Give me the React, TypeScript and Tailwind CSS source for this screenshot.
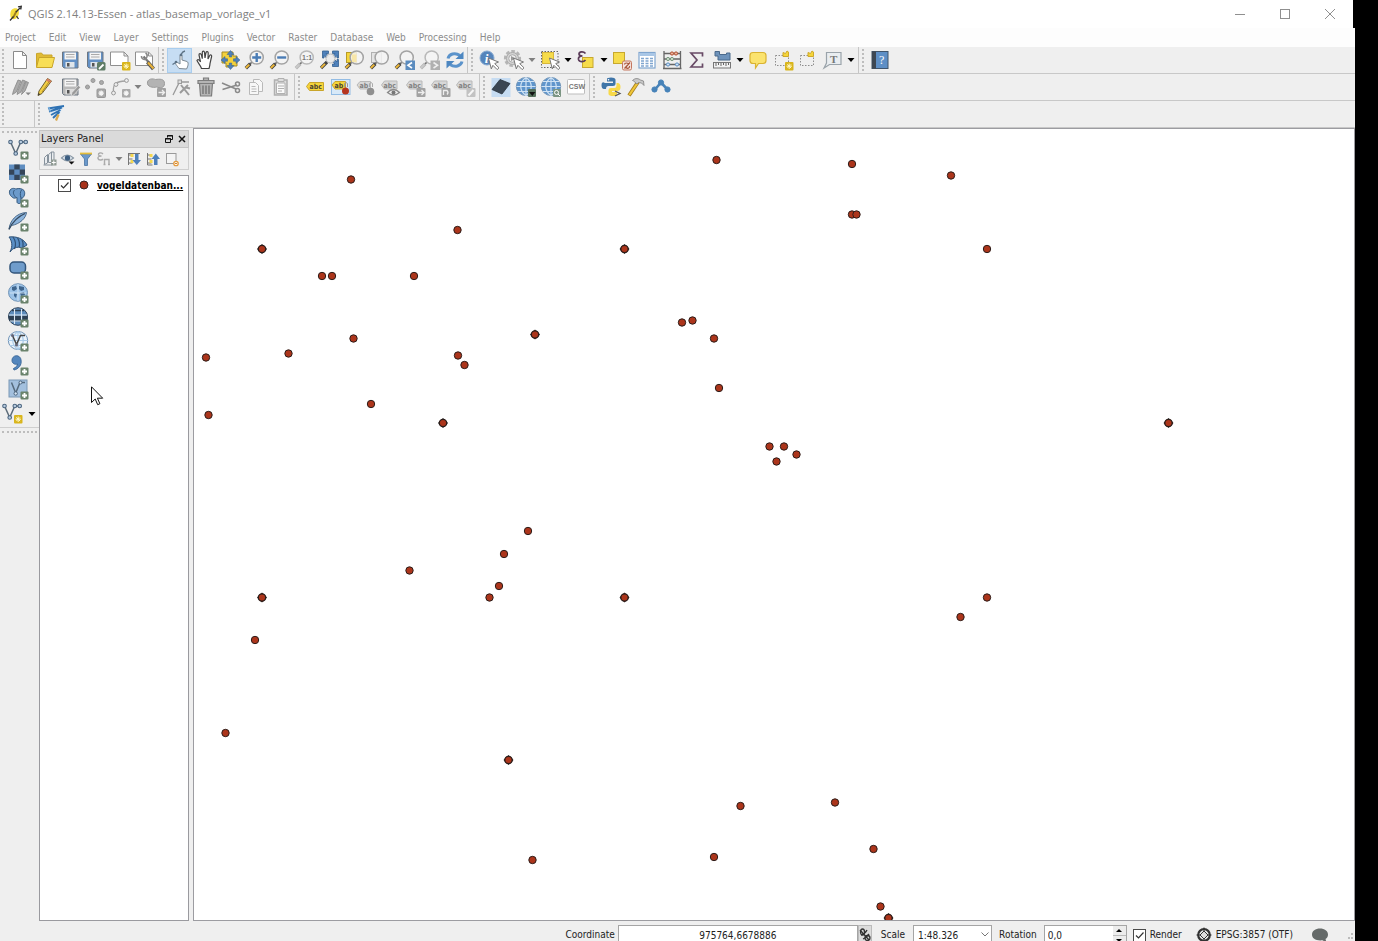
import type { ReactNode } from 'react'

const plusBadge = (
  <g>
    <rect x="14.500" y="14.500" width="8" height="8" rx="1" fill="#6a836c" />
    <path d="M18.500 16v5M16 18.500h5" stroke="#fff" strokeWidth="1.800" />
  </g>
)

const newBadge = (
  <g>
    <rect x="14" y="14" width="8.500" height="8.500" rx="1" fill="#d9b51c" />
    <path d="M18.200 15.500v5.500M15.500 18.200h5.500M16.300 16.300l3.800 3.800M20.100 16.300l-3.800 3.800" stroke="#fff7c4" strokeWidth="1" />
  </g>
)

const greyBadge = (
  <g>
    <rect x="14" y="14" width="8.500" height="8.500" rx="1" fill="#a9a9a9" />
    <path d="M18.200 15.500v5.400M15.500 18.200h5.400M16.400 16.400l3.600 3.600M20 16.400l-3.600 3.600" stroke="#f5f5f5" strokeWidth="1.200" />
  </g>
)

const arrowPointer = (
  <path d="M11.500 10l10 4-3.800 1.600 4.300 4.200-1.800 1.800-4.300-4.300-1.600 3.600z" fill="#fff" stroke="#777" strokeWidth="1" />
)

const lens = (grey = false) => (
  <g>
    <path d="M9.300 13.700l-3.300 3.300" stroke="#666" strokeWidth="1.600" />
    <path d="M7.300 15.800L2.800 20.300" stroke={grey ? '#b5b5b5' : '#444'} strokeWidth="3.400" />
    <path d="M6.300 16.600L2.800 20" stroke={grey ? '#c9c9c9' : '#edb83a'} strokeWidth="2" />
    <circle cx="13.700" cy="9.500" r="6.600" fill="#f4f4f4" fillOpacity="0.850" stroke={grey ? '#b8b8b8' : '#a3a3a3'} strokeWidth="1.500" />
  </g>
)

const disk = (body: string, label: string) => (
  <g>
    <path d="M4.500 4h15.500v16H6L4.500 18.500z" fill={body} stroke="#6c7681" strokeWidth="1" />
    <rect x="6.500" y="4.500" width="11.500" height="7" fill="#f4f4f4" />
    <path d="M8 6.500h8.500M8 9h8.500" stroke="#aaa" strokeWidth="1" />
    <rect x="7.500" y="14" width="9" height="5.500" fill={label} />
    <rect x="9" y="15" width="2.500" height="3.500" fill="#555" />
  </g>
)

const abcTag = (fill: string, stroke: string, ink: string, small = false) => (
  <g>
    <path d={small ? 'M3 10l3-3.500h10.500v7.500H6z' : 'M2.500 11.500l3-4H19.500v8H5.500z'} fill={fill} stroke={stroke} strokeWidth="1" />
    <text x="5.500" y={small ? 13 : 14} fontSize="7" fontWeight="bold" fontFamily="DejaVu Sans Condensed, sans-serif" fill={ink}>
      {small ? 'ab' : 'abc'}
    </text>
  </g>
)

const greyTag = (
  <g>
    <path d="M2.500 10l3-4H18v8H5.500z" fill="#d8d8d8" stroke="#b9b9b9" strokeWidth="1" />
    <text x="4.500" y="12.500" fontSize="7" fontWeight="bold" fontFamily="DejaVu Sans Condensed, sans-serif" fill="#808080">
      abc
    </text>
  </g>
)

const vectorNodes = (
  <g fill="#b9cde0" stroke="#4c6680" strokeWidth="1.100">
    <path d="M4.500 5L9.700 16.500 14.800 5H19.700" fill="none" stroke="#5b6b78" strokeWidth="1.500" />
    <circle cx="4.500" cy="5" r="1.800" />
    <circle cx="14.800" cy="5" r="1.800" />
    <circle cx="19.700" cy="5" r="1.800" />
    <circle cx="9.700" cy="16.500" r="1.800" />
  </g>
)

const globe = (land: string, line: string) => (
  <g>
    <ellipse cx="12" cy="11.500" rx="9.700" ry="9" fill={land} stroke="#7295b8" strokeWidth="1" />
    <path
      d="M12 2.500v18M2.500 11.500h19M4 6.500h16M4 16.500h16M12 2.500c-7 5-7 13 0 18M12 2.500c7 5 7 13 0 18"
      fill="none"
      stroke={line}
      strokeWidth="1.200"
    />
  </g>
)

const icons: Record<string, ReactNode> = {
  newProject: <path d="M5.500 3.500h9l4 4v13h-13zM14.500 3.500v4h4" fill="#fff" stroke="#8b8b8b" />,
  open: (
    <g stroke="#c9a52a" strokeWidth="1">
      <path d="M3.500 19V5.500l5-.5 1.500 2h9v4" fill="#e0bb35" />
      <path d="M3.500 19.500L6 9.500h15.500l-2.500 10z" fill="#f8de55" />
    </g>
  ),
  save: disk('#6290c5', '#dfe5ea'),
  saveAs: (
    <g>
      {disk('#6290c5', '#dfe5ea')}
      <rect x="14" y="14" width="8.500" height="8.500" rx="1.500" fill="#5f7d66" />
      <path d="M16 21l4.500-4.500" stroke="#fff" strokeWidth="1.800" />
    </g>
  ),
  newComposer: (
    <g>
      <path d="M2.500 4h13.500l4 4v9.500H2.500zM16 4v4h4" fill="#fff" stroke="#8f8f8f" />
      {newBadge}
    </g>
  ),
  composerManager: (
    <g>
      <path d="M2.500 4h13l4 4v9.500h-17zM15.500 4v4h4" fill="#fff" stroke="#8f8f8f" />
      <path d="M10.500 8.500l5 5.500" stroke="#777" strokeWidth="2.200" />
      <path d="M8.500 8a3 3 0 0 0 4.500 3l1-2.500a3 3 0 0 0-1.500-3.500" fill="none" stroke="#888" strokeWidth="1.600" />
      <path d="M14.500 14l6 7" stroke="#555" strokeWidth="4" />
      <path d="M15 14.500l5.500 6" stroke="#e5b13b" strokeWidth="2.200" />
    </g>
  ),
  touch: (
    <g>
      <path d="M11 20.500c-2-3-4.500-5-3-6 1.500-.5 3 1 4 1.500V7.500c0-1.800 2-1.800 2 0V12l5 1.500c2 1 1 5-.5 7.500z" fill="#fff" stroke="#7b8791" strokeWidth="1" />
      <path d="M13 6.500c1-2 2-3 4-3.500M4.500 16.500l4-2.500" fill="none" stroke="#5c7285" strokeWidth="1.300" />
      <circle cx="13" cy="7" r="1.300" fill="#5c7285" />
      <circle cx="8" cy="14" r="1.300" fill="#5c7285" />
    </g>
  ),
  pan: (
    <path
      d="M8.500 20.500c-1-3.500-3.500-5.500-4.500-8 .5-1.800 2.500-.5 3.500 1.500L6 7c0-1.800 1.800-2 2.300-.3l1 4V4.500c0-1.800 2-1.800 2.200 0l.5 5.500 1-5.500c.5-1.500 2.300-1 2.200.5L15 11l1.700-3.500c.8-1.300 2.300-.5 1.900 1L17 15.500c0 2-.5 3-1 5z"
      fill="#fff"
      stroke="#444"
      strokeWidth="1.200"
    />
  ),
  panSelection: (
    <g>
      <path d="M4 4h11v4h4v10h-7v1H8v-4H4z" fill="#f4d13a" stroke="#a48a24" />
      <g fill="#4d7fba" stroke="#33608f" strokeWidth="0.500">
        <path d="M12.500 2.500l3.500 4h-2.300v2.500h-2.400V6.500H9zM12.500 21.500l3.500-4h-2.300V15h-2.400v2.500H9zM3 12l4-3.500v2.300h2.500v2.400H7v2.300zM22 12l-4-3.500v2.300h-2.500v2.400H18v2.300z" />
      </g>
    </g>
  ),
  zoomIn: (
    <g>
      {lens()}
      <path d="M13.700 5v9M9.200 9.500h9" stroke="#4a7cb5" strokeWidth="2.400" />
    </g>
  ),
  zoomOut: (
    <g>
      {lens()}
      <path d="M9.200 9.500h9" stroke="#4a7cb5" strokeWidth="2.400" />
    </g>
  ),
  zoomNative: (
    <g>
      {lens(true)}
      <text x="9" y="12" fontSize="7" fontWeight="bold" fontFamily="Liberation Sans, sans-serif" fill="#777">
        1:1
      </text>
    </g>
  ),
  zoomFull: (
    <g>
      <path d="M4.500 3h6v2.500H8L10.500 8l-2 2L6 7.500V10H4.500zM20.500 3h-6v2.500H17L14.500 8l2 2L19 7.500V10h1.500zM20.500 18.500h-6V16H17l-2.500-2.500 2-2L19 14v-2.500h1.500z" fill="#4f81bb" stroke="#345f90" strokeWidth="0.800" />
      <circle cx="12.500" cy="10.500" r="4.500" fill="#e9e9e9" fillOpacity="0.900" stroke="#bbb" />
      <path d="M9 14L3 20" stroke="#444" strokeWidth="3.200" />
      <path d="M7 15.800L3.200 19.600" stroke="#edb83a" strokeWidth="1.900" />
    </g>
  ),
  zoomSelection: (
    <g>
      <rect x="3.500" y="4.500" width="10" height="10" fill="#f5d53a" stroke="#b79b28" />
      {lens()}
      <path d="M9 6.500h4.500v7.500H9z" fill="#f8e6a8" />
    </g>
  ),
  zoomLayer: (
    <g>
      <rect x="3.500" y="4.500" width="10" height="10" fill="#e3e3e3" stroke="#b0b0b0" />
      {lens()}
    </g>
  ),
  zoomLast: (
    <g>
      {lens()}
      <rect x="12.500" y="12.500" width="9.500" height="9.500" fill="#5b8cbf" />
      <path d="M19 14.500l-4 2.800 4 2.700" fill="none" stroke="#fff" strokeWidth="1.600" />
    </g>
  ),
  zoomNext: (
    <g>
      {lens(true)}
      <rect x="12.500" y="12.500" width="9.500" height="9.500" fill="#b0b0b0" />
      <path d="M15.500 14.500l4 2.800-4 2.700" fill="none" stroke="#eee" strokeWidth="1.600" />
    </g>
  ),
  refresh: (
    <g fill="none" stroke="#5b93cb" strokeWidth="3">
      <path d="M5 10.500C6 6 12 4 17 7.500" />
      <path d="M19 13.500C18 18 12 20 7 16.500" />
      <path d="M20.500 3.500v7.500h-8zM3.500 20.500V13h8z" fill="#4d87c1" stroke="none" />
    </g>
  ),
  identify: (
    <g>
      <circle cx="10" cy="10" r="7" fill="#5584bb" stroke="#86a9d1" />
      <text x="7.800" y="14.500" fontSize="13" fontWeight="bold" fontStyle="italic" fontFamily="Liberation Serif, serif" fill="#fff">
        i
      </text>
      {arrowPointer}
    </g>
  ),
  action: (
    <g>
      <circle cx="10.500" cy="10.500" r="7.300" fill="#dedede" stroke="#b5b5b5" strokeWidth="2.600" strokeDasharray="3.500 2" />
      <circle cx="10.500" cy="10.500" r="6" fill="#d5d5d5" stroke="#aaa" />
      <circle cx="10.500" cy="10.500" r="3.800" fill="#eee" stroke="#aaa" />
      <path d="M9 8l4.500 2.500L9 13z" fill="#999" />
      {arrowPointer}
    </g>
  ),
  select: (
    <g>
      <rect x="3.500" y="3.500" width="16.500" height="16" fill="none" stroke="#666" strokeDasharray="1.500 1.500" />
      <rect x="4.500" y="4.500" width="11" height="11" fill="#f6dc4b" stroke="#d8b83a" />
      {arrowPointer}
    </g>
  ),
  expression: (
    <g>
      <rect x="8.500" y="9.500" width="10.500" height="10" fill="#f6dc4b" stroke="#c7a82e" />
      <path d="M11.500 5.500C9.500 3 5 3.500 5 6c0 1.500 1.500 2 3.500 2C5.500 8 4 9.500 4.500 11.500c1 3 5.500 2.500 7 .5" fill="none" stroke="#5a3b58" strokeWidth="1.700" />
    </g>
  ),
  deselect: (
    <g>
      <rect x="3.500" y="4.500" width="11" height="11" fill="#f6dc4b" stroke="#c7a82e" />
      <rect x="12.500" y="13" width="9" height="9" rx="1.500" fill="#f4e2dc" stroke="#c5775f" />
      <path d="M14.500 20.500l5.500-6M14.500 16.500c0-2 4-2 4 0M16 19.500c2 2 4 0 3.500-1.500" fill="none" stroke="#a9543a" strokeWidth="1.200" />
    </g>
  ),
  table: (
    <g>
      <rect x="4" y="4.500" width="16" height="15.500" fill="#fff" stroke="#7fa5cf" strokeWidth="1.200" />
      <rect x="4.500" y="5" width="15" height="3" fill="#a8c6e6" />
      <path d="M6 10.500h3M10.500 10.500h3M15 10.500h3M6 13h3M10.500 13h3M15 13h3M6 15.500h3M10.500 15.500h3M15 15.500h3M6 18h3M10.500 18h3M15 18h3" stroke="#7fa5cf" strokeWidth="1.300" />
    </g>
  ),
  abacus: (
    <g>
      <path d="M4 3v18M20.500 3v18M3 20.500h18.500M4 5.500h16.500M4 11h16.500M4 16.500h16.500" fill="none" stroke="#666" strokeWidth="1.300" />
      <g fill="#f0b29a" stroke="#b14f30">
        <circle cx="12" cy="5.500" r="1.600" />
        <circle cx="16" cy="5.500" r="1.600" />
      </g>
      <g fill="#cfe0cf" stroke="#77967d">
        <circle cx="8" cy="11" r="1.600" />
        <circle cx="12" cy="11" r="1.600" />
      </g>
      <g fill="#cfe2f4" stroke="#5b8fc5">
        <circle cx="8" cy="16.500" r="1.600" />
        <circle cx="17" cy="16.500" r="1.600" />
      </g>
    </g>
  ),
  sigma: <path d="M17.500 8.500V5H6L12 12l-6 7h11.500v-3.500" fill="none" stroke="#684a66" strokeWidth="1.700" />,
  measure: (
    <g>
      <path d="M5 3.500h4.500v3h7V5H20v7H8V8H5z" fill="#6e93bb" stroke="#4b6a8c" />
      <rect x="3.500" y="14.500" width="17" height="5.500" fill="#f2f2f2" stroke="#777" />
      <path d="M6 15v3M8.500 15v2M11 15v3M13.500 15v2M16 15v3M18.500 15v2" stroke="#666" />
    </g>
  ),
  mapTips: <path d="M7 4.500h10q3 0 3 3v5q0 3-3 3h-4.500l-3 4.500v-4.500H7q-3 0-3-3v-5q0-3 3-3z" fill="#fbe36e" stroke="#dab332" strokeWidth="1.200" />,
  newBookmark: (
    <g>
      <path d="M4.500 7.500h13v10h-13z" fill="none" stroke="#8d8d8d" strokeDasharray="1.500 1.500" />
      <path d="M12 4.500l2.500 1L16 3l1.500 1v4.500H12z" fill="#f5d53a" stroke="#cfa92b" />
      {newBadge}
    </g>
  ),
  bookmarks: (
    <g>
      <path d="M4.500 7.500h13v10h-13z" fill="none" stroke="#8d8d8d" strokeDasharray="1.500 1.500" />
      <path d="M12 4.500l2.500 1L16 3l1.500 1v4.500H12z" fill="#f5d53a" stroke="#cfa92b" />
    </g>
  ),
  annotation: (
    <g>
      <path d="M5.500 4.500h14.500v12H8.500L3 20l2.500-5z" fill="#e9edf0" stroke="#9aa3aa" strokeWidth="1.200" />
      <text x="9" y="14.500" fontSize="11" fontWeight="bold" fontFamily="Liberation Serif, serif" fill="#777">
        T
      </text>
    </g>
  ),
  help: (
    <g>
      <rect x="4" y="3.500" width="16" height="17" fill="#5e8fc6" stroke="#40546b" />
      <rect x="4" y="3.500" width="4" height="17" fill="#3d4753" />
      <text x="11" y="16" fontSize="12" fontFamily="Liberation Serif, serif" fill="#fff">
        ?
      </text>
    </g>
  ),
  currentEdits: (
    <g>
      <path d="M4.500 19.500l1-4L10 5l3 1-4.500 11zM9 19.500l1-4L14.500 5l3 1L13 17zM13.500 19.500l1-4L18 6.500l2.500 1L17 16z" fill="#ababab" stroke="#868686" strokeWidth="0.800" />
      <path d="M17.500 17.500h5.500l-2.800 2.800z" fill="#888" />
    </g>
  ),
  pencil: (
    <g>
      <path d="M5 20.500l1-4.500L14.500 3.500l4 2.500L9 18.500z" fill="#f3cf45" stroke="#6e6034" strokeWidth="1" />
      <path d="M14.500 3.500l4 2.500-1.500 2-4-2.500z" fill="#d97e63" />
      <path d="M9 17l7.500-11" stroke="#b1902a" />
      <path d="M5 20.500l.6-2.500 1.700 1.300z" fill="#333" />
    </g>
  ),
  saveEdits: (
    <g>
      {disk('#b9b9b9', '#dcdcdc')}
      <path d="M13 21.500l1-4 6.500-7 2 1.800-6.500 7.500z" fill="#999" stroke="#eee" strokeWidth="0.600" />
    </g>
  ),
  addPoints: (
    <g fill="#ababab" stroke="#979797">
      <circle cx="4.500" cy="12" r="2" />
      <circle cx="10" cy="5.500" r="2" />
      <circle cx="18.500" cy="7.500" r="2" />
      {greyBadge}
    </g>
  ),
  addCurve: (
    <g>
      <path d="M5.500 17C4.500 8 9 6.500 17.500 6" fill="none" stroke="#a3a3a3" strokeWidth="1.300" />
      <g fill="#eee" stroke="#999">
        <circle cx="5.500" cy="18" r="1.900" />
        <circle cx="8" cy="9.500" r="1.900" />
        <circle cx="18.500" cy="5.500" r="1.900" />
      </g>
      {greyBadge}
    </g>
  ),
  moveFeature: (
    <g>
      <path d="M3.500 7c1-3.500 5-3.500 8-2.500 4-.5 9-1 9 4s-5 4.500-8 3.500c-3 1-10 0-9-5z" fill="#b3b3b3" stroke="#9a9a9a" />
      <rect x="13" y="13" width="9" height="9" rx="1" fill="#a2a2a2" />
      <path d="M14.500 17.500h6M18 15l2.500 2.500L18 20" fill="none" stroke="#eee" strokeWidth="1.300" />
    </g>
  ),
  nodeTool: (
    <g fill="none" stroke="#9a9a9a">
      <path d="M4 20L10.500 7h9.500" strokeWidth="1.300" />
      <rect x="9" y="5" width="3.500" height="3.500" fill="#ddd" />
      <path d="M19 10l-8 8M12 10l8 10M17 12.500l4 1" strokeWidth="2" />
    </g>
  ),
  trash: (
    <g fill="#b4b4b4" stroke="#7d7d7d" strokeWidth="1.200">
      <path d="M9.500 5V3h5v2M5.500 8.500h13L17.500 21h-11z" />
      <path d="M4 5.500h16v3H4z" />
      <path d="M9 10.500v8.500M12 10.500v8.500M15 10.500v8.500" stroke="#6d6d6d" fill="none" />
    </g>
  ),
  cut: (
    <g fill="none" stroke="#8a8a8a" strokeWidth="1.500">
      <path d="M3 8l14 6M3.500 14.500L18 10" />
      <circle cx="18.500" cy="9" r="2" />
      <circle cx="18.500" cy="15.500" r="2" />
    </g>
  ),
  copy: (
    <g fill="#f7f7f7" stroke="#b9b9b9">
      <path d="M9.500 4.500h6l3 3v9h-9z" />
      <path d="M5.500 7.500h6l3 3v9h-9zM7.500 11.500h4M7.500 14h5M7.500 16.500h5" />
    </g>
  ),
  paste: (
    <g fill="#dedede" stroke="#b0b0b0">
      <path d="M5.500 5h12.500v15H5.500z" strokeWidth="1.500" />
      <path d="M7.500 8h8.500v10.500H7.500z" fill="#fafafa" />
      <path d="M9 3.500h6v3H9z" />
      <path d="M9 11h6M9 13.500h6M9 16h4" />
    </g>
  ),
  label: abcTag('#f5d53a', '#c9a52a', '#4a4230'),
  labelActive: (
    <g>
      <rect x="2.500" y="4.500" width="18.500" height="15" fill="#d8e9f8" stroke="#93bce4" />
      {abcTag('#f5d53a', '#c9a52a', '#4a4230', true)}
      <circle cx="16.500" cy="16" r="3.500" fill="#b53520" />
      <path d="M15.500 12V8.500q1.500-2 3 0V12" fill="none" stroke="#999" />
    </g>
  ),
  labelPin: (
    <g>
      {abcTag('#d8d8d8', '#b9b9b9', '#808080', true)}
      <circle cx="16.500" cy="16.500" r="3.800" fill="#8f8f8f" />
      <path d="M15.500 12V8.500q1.500-2 3 0V12" fill="none" stroke="#aaa" />
    </g>
  ),
  labelShow: (
    <g>
      {greyTag}
      <path d="M8.500 17.500q6-6 12 0q-6 5-12 0z" fill="#eee" stroke="#8a8a8a" strokeWidth="1.300" />
      <circle cx="14.500" cy="17.500" r="2" fill="#777" />
    </g>
  ),
  labelMove: (
    <g>
      {greyTag}
      <rect x="12.500" y="13" width="9" height="9" rx="1" fill="#a2a2a2" />
      <path d="M14 17.500h6M17.500 15l2.500 2.500-2.500 2.500" fill="none" stroke="#eee" strokeWidth="1.300" />
    </g>
  ),
  labelRotate: (
    <g>
      {greyTag}
      <rect x="12.500" y="13" width="9" height="9" rx="1" fill="#a2a2a2" />
      <path d="M14.500 20v-4.500h3.500q2 2 0 4" fill="none" stroke="#eee" strokeWidth="1.300" />
    </g>
  ),
  labelEdit: (
    <g>
      {greyTag}
      <rect x="12.500" y="13" width="9" height="9" rx="1" fill="#c2c2c2" />
      <path d="M14.500 20.500l5-5.500" stroke="#f5f5f5" strokeWidth="2" />
    </g>
  ),
  darkTile: (
    <g>
      <rect x="2.500" y="3" width="19" height="19" fill="#c6dcf2" />
      <path d="M3 14.500L11 4.500l10 4-8 10.500z" fill="#3a4653" stroke="#2a333d" strokeWidth="0.800" />
    </g>
  ),
  metaGlobe: (
    <g>
      {globe('#5f95cc', '#cfe2f4')}
      <rect x="14" y="14" width="8" height="8" rx="1" fill="#55705c" />
      <path d="M15 17h6.500l-3.200 4z" fill="#111" />
    </g>
  ),
  searchGlobe: (
    <g>
      {globe('#5f95cc', '#cfe2f4')}
      <rect x="14" y="14" width="8" height="8" rx="1" fill="#7c9583" />
      <circle cx="17.500" cy="17.500" r="2" fill="none" stroke="#fff" />
      <path d="M19 19l2 2" stroke="#fff" />
    </g>
  ),
  csw: (
    <g>
      <rect x="3.500" y="4.500" width="17" height="14.500" rx="1" fill="#fff" stroke="#bdbdbd" />
      <text x="4.700" y="14" fontSize="7" fontWeight="bold" fontFamily="Liberation Sans, sans-serif" fill="#777">
        CSW
      </text>
    </g>
  ),
  python: (
    <g>
      <path d="M8 8h6V6.500H8V4q0-1.500 4-1.500t4.500 2V9q0 2-2.500 2H9.500Q7 11 7 14H5q-2.500 0-2.500-4T6 8z" fill="#3f75a8" />
      <path d="M17.500 8H19q2.500.5 2.500 4T19 16h-6v1h5v2q0 2-4 2t-4.500-2v-4q0-2 2.500-2h3.500q2 0 2-3z" fill="#f8d94a" />
      <circle cx="9.500" cy="4.700" r="0.800" fill="#fff" />
      <path d="M16 16l5 2.500-5 2.500" fill="none" stroke="#555" strokeWidth="1.300" />
    </g>
  ),
  hammer: (
    <g>
      <path d="M5 20.500L14 7" stroke="#a47f1e" strokeWidth="3.800" />
      <path d="M5.300 20L13.500 8" stroke="#f0c638" strokeWidth="2.200" />
      <path d="M8.500 5.500c3-3 6-2 8-.5l3 1 .5 4.500-2.500-2.500-3-.5-1.500 1.500-2-1.500c-.5-1.500-1.500-1.500-2.500-2z" fill="#c9c9c9" stroke="#808080" strokeWidth="0.800" />
    </g>
  ),
  processing: (
    <g fill="#4783b9" stroke="#4783b9">
      <path d="M6 14.500L12 7.500l6.500 7" fill="none" strokeWidth="2.600" />
      <circle cx="12" cy="7.500" r="2.600" />
      <circle cx="5.500" cy="14.500" r="2.600" />
      <circle cx="18.500" cy="14.500" r="2.600" />
    </g>
  ),
  fan: (
    <g>
      <path d="M4 5l16-1-8 15z" fill="#dce9f5" />
      <path d="M4 6.500L20 4M5 9.500l13-4M7 13L16.500 8M9 16l6.500-6" fill="none" stroke="#2f72b3" strokeWidth="1.900" />
      <path d="M4.500 5l2 4.500" stroke="#7fb0dc" strokeWidth="1.500" />
      <path d="M14.500 12.500l-2.500 6" stroke="#dca94b" strokeWidth="2.200" />
    </g>
  ),
  addVector: (
    <g>
      {vectorNodes}
      {plusBadge}
    </g>
  ),
  addRaster: (
    <g>
      <rect x="3" y="3.500" width="16" height="15.500" fill="#5f8dc0" />
      <path d="M8.300 3.500h5.400v5H8.300zM3 8.500h5.300v5.300H3zM13.700 8.500H19v5.300h-5.300zM8.300 13.800h5.400V19H8.300z" fill="#35465a" />
      {plusBadge}
    </g>
  ),
  addPostgis: (
    <g>
      <path d="M4 5c2-2.500 5-1.500 6-1 3-1 6-.5 8 1.500 1.500 3 .5 6-2 8l-1-.5v4c0 2-4 2-4 0v-4.500c-2 1-3.500.5-3.500.5C4 11 2.500 8 4 5z" fill="#6b9acb" stroke="#35597e" />
      <path d="M8.500 5c-2 2.500-1 5 1.500 7.500M15.500 5c-1.500 2-1.500 5-.5 8" fill="none" stroke="#35597e" />
      {plusBadge}
    </g>
  ),
  addSpatialite: (
    <g>
      <path d="M3 20C4 12 10 4 20.500 3.500 20 9 14 15 5.500 16.500z" fill="#8cb4dd" stroke="#4b6a8a" />
      <path d="M3 20.500C6 13 13 7 19 4.500" fill="none" stroke="#33485e" strokeWidth="1.300" />
      {plusBadge}
    </g>
  ),
  addMssql: (
    <g>
      <path d="M3 4c8-1 15 2 18 8l-5 3c-5-2-9 0-12 4 3-6 2-11-1-15z" fill="#5a8fc6" stroke="#2f5176" />
      <path d="M7 4c3 4 3 8 1.500 12M11.500 5c2 3 2.500 6 1.500 9M16 7c1.500 2.500 1.500 5 1 7.500" fill="none" stroke="#2f5176" strokeWidth="1.200" />
      {plusBadge}
    </g>
  ),
  addOracle: (
    <g>
      <rect x="4" y="5" width="15.500" height="11" rx="4" fill="#6f9ccb" stroke="#33567c" strokeWidth="1.500" />
      {plusBadge}
    </g>
  ),
  addWms: (
    <g>
      <ellipse cx="12" cy="11.500" rx="9.500" ry="8.800" fill="#9cc3e8" stroke="#7295b8" />
      <path d="M6 6l4-1 1 3-3 2-2-1zM13 5l5 1v3l-3 1-2-2zM8 12l3 1-1 4-2-2zM14 12l4-1 1 3-4 1z" fill="#3f658d" />
      <path d="M4 12h16M12 3v17" stroke="#dbe9f6" strokeWidth="0.800" />
      {plusBadge}
    </g>
  ),
  addWcs: (
    <g>
      <ellipse cx="12" cy="11.500" rx="9.500" ry="8.800" fill="#5d8cbc" stroke="#2f435a" />
      <path d="M6 5.500h12M3 11.500h4.500v4H4zM9 11.500h6v4H9zM17 11.500h4v4h-4z" fill="#2e4054" stroke="#2e4054" strokeWidth="1.500" />
      <path d="M3 10h18M4 16h16M8.500 4v15M15.500 4v15" stroke="#dce9f5" strokeWidth="1.100" />
      {plusBadge}
    </g>
  ),
  addWfs: (
    <g>
      {globe('#eaf3fb', '#a9cbe9')}
      <path d="M6.500 6.500L10.500 15.500l4-9h4.500" fill="none" stroke="#444" strokeWidth="1.500" />
      <circle cx="6.500" cy="6.500" r="1.500" fill="#667" />
      <circle cx="10.500" cy="16" r="1.500" fill="#667" />
      {plusBadge}
    </g>
  ),
  addCsv: (
    <g>
      <path d="M6 7.500a4.500 4.500 0 0 1 9-.5c1 5-2.500 9-7 10l-.5-1.500c2.500-1 4-3 4-4.500-3 1-5.500-1-5.500-3.500z" fill="#5486bd" stroke="#3d6a9b" />
      {plusBadge}
    </g>
  ),
  addVirtual: (
    <g>
      <rect x="3" y="3" width="18" height="17" fill="#a3c0de" stroke="#7b98b5" />
      <path d="M5.500 5.500L9.700 16l4.300-10.500h5" fill="none" stroke="#55697c" strokeWidth="1.500" />
      <circle cx="9.700" cy="16.500" r="1.700" fill="#d6e4f1" stroke="#4c6680" />
      <circle cx="14.500" cy="5.500" r="1.500" fill="#d6e4f1" stroke="#4c6680" />
      {plusBadge}
    </g>
  ),
  newVector: (
    <g>
      {vectorNodes}
      {newBadge}
    </g>
  ),
  addGroup: (
    <g fill="#e8ebee" stroke="#87929c">
      <path d="M6.500 10.500l3-3v8.500l-3 1.500zM10.500 7.500L13.500 5v10.500h-3zM13.500 5h2.500v9" />
      <path d="M5.500 18h9" />
      <rect x="13" y="12.500" width="5.500" height="6" fill="#8f9a93" stroke="none" />
      <path d="M15.800 13.500v4M13.800 15.500h4" stroke="#fff" />
    </g>
  ),
  visibility: (
    <g>
      <path d="M5.500 11q5.500-6 12 0q-6 5.500-12 0z" fill="#e8eef4" stroke="#8b99a6" strokeWidth="1.200" />
      <circle cx="11.500" cy="11" r="2.700" fill="#3e5f82" />
      <path d="M12.500 14.500h6l-3 3z" fill="#111" />
    </g>
  ),
  filter: (
    <g>
      <path d="M6.500 7h11l-4 5v6.500h-3V12z" fill="#6b99cb" stroke="#4a74a2" strokeWidth="0.800" />
      <path d="M6 6.500h12" stroke="#e5be3b" strokeWidth="1.800" />
    </g>
  ),
  filterExpr: (
    <g fill="none" stroke="#ababab">
      <path d="M11 7C9 5 6 6 6.500 8c.5 1 1.500 1 3 1-2 0-4 .5-3.500 2.500.5 2 4 2 5 .5" strokeWidth="1.400" />
      <path d="M12.500 17.500v-5h4.500v5M11.500 17.500h2M16 17.500h2" strokeWidth="1.400" />
    </g>
  ),
  expand: (
    <g>
      <path d="M6.500 6v12M6.500 8h4M6.500 12h4M6.500 16h4M6 6.500h12" fill="none" stroke="#777" />
      <path d="M8.500 7h3v3h-3zM8.500 13h3v3h-3z" fill="#f4d74e" />
      <path d="M13 7h3.500v6H19l-4.200 5-4.300-5H13z" fill="#4d80ba" />
    </g>
  ),
  collapse: (
    <g>
      <path d="M6.500 6v12M6.500 8h4M6.500 12h4M6.500 16h4M6.500 18h5" fill="none" stroke="#777" />
      <path d="M8.500 7h3v3h-3zM8.500 13h3v3h-3z" fill="#f4d74e" />
      <path d="M13 18h3.500v-6H19l-4.200-5.500L10.500 12H13z" fill="#4d80ba" />
    </g>
  ),
  removeLayer: (
    <g>
      <rect x="6.500" y="6.500" width="9.500" height="10" fill="#f4f4f4" stroke="#9a9a9a" />
      <circle cx="16" cy="16.500" r="2.200" fill="#fff" stroke="#e39c42" strokeWidth="1.300" />
      <path d="M15 16.500h2" stroke="#d98425" />
    </g>
  ),
}

const fileTools = ['newProject', 'open', 'save', 'saveAs', 'newComposer', 'composerManager']
const navTools = ['pan', 'panSelection', 'zoomIn', 'zoomOut', 'zoomNative', 'zoomFull', 'zoomSelection', 'zoomLayer', 'zoomLast', 'zoomNext', 'refresh']
const labelTools = ['label', 'labelActive', 'labelPin', 'labelShow', 'labelMove', 'labelRotate', 'labelEdit']
const layerTools = ['addVector', 'addRaster', 'addPostgis', 'addSpatialite', 'addMssql', 'addOracle', 'addWms', 'addWcs', 'addWfs', 'addCsv', 'addVirtual']
const menus = ['Project', 'Edit', 'View', 'Layer', 'Settings', 'Plugins', 'Vector', 'Raster', 'Database', 'Web', 'Processing', 'Help']

// x, y in map pixels; the third value marks stacked observations
const points: [number, number, number?][] = [
  [157, 50.5], [522.5, 31], [658, 35], [757, 46.5], [658, 85.5], [662.5, 85.5], [263.5, 101],
  [68, 120, 1], [430.5, 120, 1], [793, 120], [128, 147], [138, 147], [220, 147], [159.5, 209.5],
  [341, 205.5, 1], [488, 193.5], [498.5, 191.5], [520, 209.5], [12, 228.5], [94.5, 224.5],
  [264, 226.5], [270.5, 236], [525, 259], [14.5, 286], [177, 275], [249, 294, 1], [974.5, 294, 1],
  [575.5, 317.5], [590, 317.5], [602.5, 325.5], [582.5, 332.5], [334, 402], [310, 425],
  [215.5, 441.5], [305, 457], [295.5, 468.5], [68, 468.5, 1], [430.5, 468.5, 1], [793, 468.5],
  [766.5, 488], [61, 511], [31.5, 604], [314.5, 631, 1], [546.5, 677], [641, 673.5],
  [338.5, 731], [520, 728], [679.5, 720], [686.5, 777.5], [694.5, 789, 1],
]

function Icon({ name }: { name: string }) {
  return (
    <svg viewBox="0 0 24 24" className="h-6 w-6 shrink-0" aria-hidden="true">
      {icons[name]}
    </svg>
  )
}

function Tool({ name, active }: { name: string; active?: boolean }) {
  return (
    <button
      aria-label={name}
      className={`flex h-[25px] w-[25px] shrink-0 items-center justify-center ${active ? 'border border-[#a9cdee] bg-[#c6ddf3]' : ''}`}
    >
      <Icon name={name} />
    </button>
  )
}

function Drop({ muted }: { muted?: boolean }) {
  return (
    <button aria-label="More" className="flex h-[25px] w-[11px] shrink-0 items-center justify-center">
      <svg viewBox="0 0 8 4" className="h-1 w-2" aria-hidden="true">
        <path d="M.500 0h7L4 4z" fill={muted ? '#808080' : '#000'} />
      </svg>
    </button>
  )
}

function Group({ children, first, className = '' }: { children?: ReactNode; first?: boolean; className?: string }) {
  return (
    <div className={`flex items-center ${first ? 'pl-[2px]' : 'border-l border-[#c6c6c6] pl-[3px]'} ${className}`}>
      <span className="mr-[3px] h-[22px] border-l-2 border-dotted border-[#bdbdbd]" />
      {children}
    </div>
  )
}

function Row({ children }: { children: ReactNode }) {
  return <div className="flex h-[27px] shrink-0 border-b border-[#c8c8c8] bg-[#efefef]">{children}</div>
}

function Check({ id }: { id: string }) {
  return (
    <span className="relative h-[13px] w-[13px] shrink-0">
      <input id={id} type="checkbox" defaultChecked className="block h-[13px] w-[13px] appearance-none border border-[#4a4a4a] bg-white" />
      <svg viewBox="0 0 13 13" className="pointer-events-none absolute inset-0" aria-hidden="true">
        <path d="M3 6.500l2.500 2.500L10.500 3.500" fill="none" stroke="#333" strokeWidth="1.200" />
      </svg>
    </span>
  )
}

function TitleBar() {
  return (
    <header className="flex h-[28px] shrink-0 items-center border-r-2 border-black bg-white pl-2">
      <svg viewBox="0 0 16 18" className="mr-1 h-[18px] w-4" aria-hidden="true">
        <path d="M3.500 5c2-2.500 6-2.500 7 0s0 7-2.500 8.500-5 .5-5.500-2S2.500 6 3.500 5z" fill="#f3dc3c" />
        <path d="M5 13l3.500-7" stroke="#9c7d1f" strokeWidth="1.800" />
        <path d="M2 15.500l3.500-4M8 7l4.500-4.500M10 1.800l3.300-.600-.5 3.300M8.500 11l2 3" fill="none" stroke="#333" strokeWidth="1.300" />
      </svg>
      <h1 className="flex-1 font-['Open_Sans',sans-serif] text-[11px] text-[#808080]">QGIS 2.14.13-Essen - atlas_basemap_vorlage_v1</h1>
      <button aria-label="Minimize" className="flex h-full w-[45px] items-center justify-center">
        <span className="h-px w-[10px] bg-[#8f8f8f]" />
      </button>
      <button aria-label="Maximize" className="flex h-full w-[45px] items-center justify-center">
        <span className="h-[10px] w-[10px] border border-[#8f8f8f]" />
      </button>
      <button aria-label="Close" className="flex h-full w-[46px] items-center justify-center">
        <svg viewBox="0 0 10 10" className="h-[10px] w-[10px]" aria-hidden="true">
          <path d="M0 0l10 10M10 0L0 10" stroke="#8f8f8f" />
        </svg>
      </button>
    </header>
  )
}

function Toolbars() {
  return (
    <>
      <Row>
        <Group first className="pr-px">
          {fileTools.map((name) => <Tool key={name} name={name} />)}
        </Group>
        <Group>
          <Tool name="touch" active />
          {navTools.map((name) => <Tool key={name} name={name} />)}
        </Group>
        <Group className="pr-[2px]">
          <Tool name="identify" />
          <Tool name="action" />
          <Drop muted />
          <Tool name="select" />
          <Drop />
          <Tool name="expression" />
          <Drop />
          {['deselect', 'table', 'abacus', 'sigma', 'measure'].map((name) => <Tool key={name} name={name} />)}
          <Drop />
          {['mapTips', 'newBookmark', 'bookmarks', 'annotation'].map((name) => <Tool key={name} name={name} />)}
          <Drop />
        </Group>
        <Group>
          <Tool name="help" />
        </Group>
      </Row>
      <Row>
        <Group first className="pr-px">
          {['currentEdits', 'pencil', 'saveEdits', 'addPoints', 'addCurve'].map((name) => <Tool key={name} name={name} />)}
          <Drop muted />
          {['moveFeature', 'nodeTool', 'trash', 'cut', 'copy', 'paste'].map((name) => <Tool key={name} name={name} />)}
        </Group>
        <Group className="pr-px">
          {labelTools.map((name) => <Tool key={name} name={name} />)}
        </Group>
        <Group className="pr-px">
          {['darkTile', 'metaGlobe', 'searchGlobe', 'csw'].map((name) => <Tool key={name} name={name} />)}
        </Group>
        <Group>
          {['python', 'hammer', 'processing'].map((name) => <Tool key={name} name={name} />)}
        </Group>
      </Row>
      <Row>
        <Group first className="w-[34px]" />
        <Group>
          <Tool name="fan" />
        </Group>
      </Row>
    </>
  )
}

function LayersPanel() {
  return (
    <aside className="flex w-[150px] shrink-0 flex-col pt-[2px]">
      <div className="flex h-[18px] items-center border border-[#c4c4c4] bg-[#dadada] pl-px">
        <h2 className="flex-1 text-[11px]">Layers Panel</h2>
        <button aria-label="Float" className="flex w-[13px] justify-center">
          <svg viewBox="0 0 8 8" className="h-2 w-2" fill="none" stroke="#111" aria-hidden="true">
            <path d="M2.500 2.500v-2h5v4h-2M2 1h6M.5 3.500h5v4h-5zM0 4h6" />
          </svg>
        </button>
        <button aria-label="Close panel" className="flex w-[13px] justify-center">
          <svg viewBox="0 0 8 8" className="h-2 w-2" aria-hidden="true">
            <path d="M1 1l6 6M7 1L1 7" stroke="#111" strokeWidth="1.500" />
          </svg>
        </button>
      </div>
      <div className="mb-[5px] flex h-[22px] items-center border border-t-0 border-[#cfcfcf] pl-px">
        {['addGroup', 'visibility', 'filter', 'filterExpr'].map((name) => (
          <button key={name} aria-label={name} className="flex w-[18px] justify-center">
            <Icon name={name} />
          </button>
        ))}
        <Drop muted />
        {['expand', 'collapse', 'removeLayer'].map((name) => (
          <button key={name} aria-label={name} className="flex w-[19px] justify-center">
            <Icon name={name} />
          </button>
        ))}
      </div>
      <div className="relative flex-1 border border-[#9a9a9f] bg-white">
        <div className="flex h-[18px] items-center pl-[18px]">
          <Check id="layer" />
          <svg viewBox="0 0 10 10" className="ml-2 mr-2 h-[10px] w-[10px] shrink-0" aria-hidden="true">
            <circle cx="5" cy="5" r="4" fill="#a8321a" stroke="#3a2622" />
          </svg>
          <label htmlFor="layer" className="font-bold text-black underline">vogeldatenban...</label>
        </div>
        <svg viewBox="0 0 13 20" className="absolute left-[51px] top-[210px] h-5 w-[13px]" aria-hidden="true">
          <path d="M.5.800v15.700l3.700-3.500 2.500 5.700 2.200-1-2.500-5.500h5.300z" fill="#fff" stroke="#111" />
        </svg>
      </div>
    </aside>
  )
}

function StatusBar() {
  return (
    <footer className="flex h-5 shrink-0 items-start overflow-hidden bg-[#efefef] pl-4 pt-1 leading-5">
      <label htmlFor="coordinate" className="ml-auto">Coordinate</label>
      <input
        id="coordinate"
        defaultValue="975764,6678886"
        className="ml-[3px] h-[21px] w-[240px] min-w-0 border border-[#a5a5a5] bg-white text-center leading-5"
      />
      <button aria-label="Toggle extents" className="h-5 w-[14px] shrink-0 border border-[#bbb] bg-[#dcdcdc]">
        <svg viewBox="0 0 12 16" className="h-4 w-3" fill="none" stroke="#333" strokeWidth="1.300" aria-hidden="true">
          <path d="M1 3l9 10M2 8q4-1 6-5M4 12q3-1 6-5" />
          <ellipse cx="3.500" cy="5" rx="2" ry="3" />
          <ellipse cx="8.500" cy="11" rx="2.500" ry="2.500" />
        </svg>
      </button>
      <label htmlFor="scale" className="ml-[9px]">Scale</label>
      <span className="relative ml-2 shrink-0">
        <select id="scale" className="block h-[21px] w-[79px] appearance-none border border-[#a5a5a5] bg-white pl-1 leading-5">
          <option>1:48.326</option>
        </select>
        <svg viewBox="0 0 8 5" className="pointer-events-none absolute right-[3px] top-[7px] h-[5px] w-2" aria-hidden="true">
          <path d="M.5.500L4 4 7.500.5" fill="none" stroke="#777" />
        </svg>
      </span>
      <label htmlFor="rotation" className="ml-[7px]">Rotation</label>
      <span className="ml-[7px] flex h-[22px] w-[83px] shrink-0 border border-[#a5a5a5] bg-white">
        <input id="rotation" defaultValue="0,0" className="w-0 flex-1 pl-[3px] leading-5" />
        <span className="flex w-[13px] flex-col bg-[#ececec]">
          <button aria-label="Increase" className="flex h-[10px] items-center justify-center border-b border-[#bbb]">
            <svg viewBox="0 0 6 3" className="h-[3px] w-[6px]" aria-hidden="true"><path d="M0 3h6L3 0z" /></svg>
          </button>
          <button aria-label="Decrease" className="flex h-[9px] items-center justify-center">
            <svg viewBox="0 0 6 3" className="h-[3px] w-[6px]" aria-hidden="true"><path d="M0 0h6L3 3z" /></svg>
          </button>
        </span>
      </span>
      <span className="ml-[6px] flex h-5 items-center gap-1">
        <Check id="render" />
        <label htmlFor="render">Render</label>
      </span>
      <button className="ml-[14px] flex h-5 shrink-0 items-center gap-1">
        <svg viewBox="0 0 16 16" className="h-4 w-4" fill="none" stroke="#333" aria-hidden="true">
          <circle cx="8" cy="8" r="5.800" strokeWidth="2.200" />
          <path d="M8 .5v15M.5 8h15" strokeWidth="1" />
          <path d="M8 4L12 8 8 12 4 8z" fill="#ddd" strokeWidth="1" />
        </svg>
        EPSG:3857 (OTF)
      </button>
      <button aria-label="Messages" className="ml-[18px] flex h-5 w-[18px] shrink-0 items-center">
        <svg viewBox="0 0 18 16" className="h-4 w-[18px]" aria-hidden="true">
          <path d="M9 1.500c4.500 0 8 2.500 8 6 0 2-1 3.500-2.500 4.500l1 3.500-4-2.200C5 14 1 11.500 1 7.500c0-3.500 3.500-6 8-6z" fill="#656a69" />
        </svg>
      </button>
      <svg viewBox="0 0 8 8" className="ml-4 mr-[2px] mt-2 h-2 w-2" fill="#bbb" aria-hidden="true">
        <path d="M6 0h2v2H6zM3 4h2v2H3zM6 4h2v2H6z" />
      </svg>
    </footer>
  )
}

export default function App() {
  return (
    <div className="flex h-screen overflow-hidden bg-black pr-[23px] font-['DejaVu_Sans_Condensed','DejaVu_Sans',sans-serif] text-[10px] text-[#222]">
      <div className="flex min-w-0 flex-1 flex-col bg-[#efefef]">
        <TitleBar />
        <nav className="flex h-[19px] shrink-0 items-center gap-[13px] bg-[#fdfdfd] pl-[5px] text-[#8c8c8c]">
          {menus.map((item) => <button key={item}>{item}</button>)}
        </nav>
        <Toolbars />
        <main className="flex min-h-0 flex-1">
          <div className="flex w-[39px] shrink-0 flex-col pt-[3px]">
            <span className="mx-[2px] mb-1 border-t-2 border-dotted border-[#bdbdbd]" />
            <div className="flex flex-col border-b border-[#cfcfcf] pb-px pl-[6px]">
              {layerTools.map((name) => (
                <button key={name} aria-label={name} className="h-6 w-6">
                  <Icon name={name} />
                </button>
              ))}
              <div className="-ml-[6px] flex">
                <button aria-label="newVector" className="h-6 w-[26px]">
                  <Icon name="newVector" />
                </button>
                <Drop />
              </div>
            </div>
            <span className="mx-[2px] mt-[3px] border-t-2 border-dotted border-[#bdbdbd]" />
          </div>
          <LayersPanel />
          <section aria-label="Map" className="ml-1 min-w-0 flex-1 overflow-hidden border border-[#9c9ca1] bg-white">
            <svg className="h-full w-full" aria-hidden="true">
              {points.map(([x, y, stacked]) => (
                <g key={`${x}-${y}`}>
                  {stacked && <path d={`M${x} ${y - 5}L${x + 5} ${y}L${x} ${y + 5}L${x - 5} ${y}z`} fill="#222" />}
                  <circle cx={x} cy={y} r="3.700" fill="#ac351b" stroke="#2b1d1a" strokeWidth={stacked ? 1.3 : 1} />
                </g>
              ))}
            </svg>
          </section>
        </main>
        <StatusBar />
      </div>
    </div>
  )
}
